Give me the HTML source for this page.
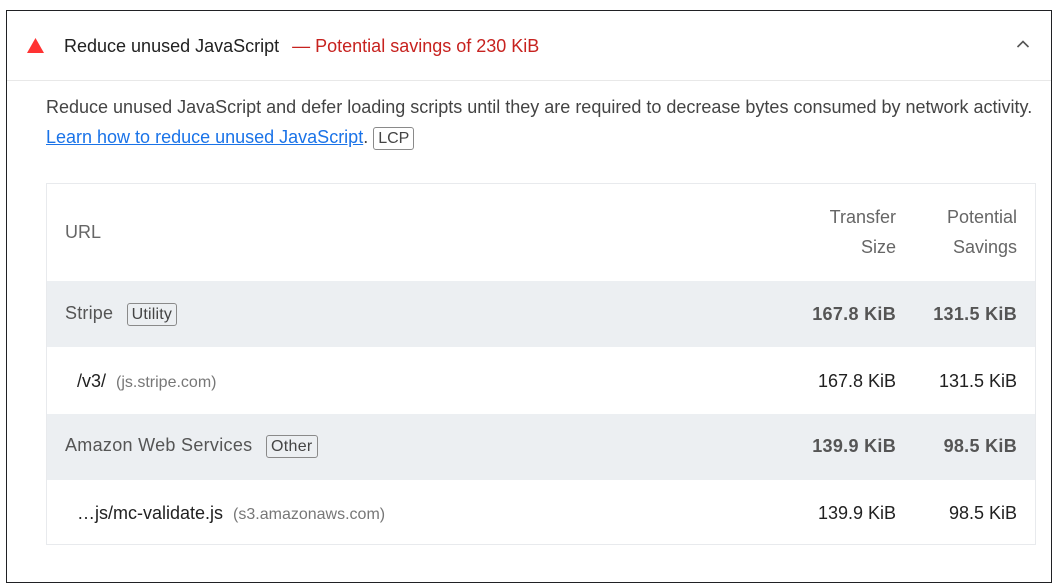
<!DOCTYPE html>
<html><head><style>
*{margin:0;padding:0;box-sizing:border-box}
body{width:1058px;height:585px;background:#fff;font-family:"Liberation Sans",Arial,sans-serif;font-size:18px;color:#212121;position:relative;overflow:hidden}
.a{position:absolute;white-space:nowrap}
.frame{position:absolute;left:6px;top:10px;width:1046px;height:573px;border:1px solid #202124}
.hl{position:absolute;left:7px;top:80px;width:1044px;height:1px;background:#e8e8e8}
.tbl{position:absolute;left:46px;top:183px;width:990px;height:362px;border:1px solid #e8eaed}
.row{position:absolute;left:0;width:988px}
.g{background:#eceff2}
.badge{display:inline-block;border:1px solid #8a8a8a;border-radius:3px;padding:0 4px;line-height:21px;font-size:16px;color:#444;margin-left:3px}
.r{text-align:right}
b{font-weight:bold;letter-spacing:0.3px}
</style></head><body>
<div class="frame"></div>
<svg class="a" style="left:27px;top:38px" width="17" height="15"><polygon points="8.5,0 17,15 0,15" fill="#ff3333"/></svg>
<div class="a" style="left:64px;top:36px;color:#212121">Reduce unused JavaScript<span style="color:#c7221f;margin-left:13px">—&nbsp;Potential savings of 230 KiB</span></div>
<svg class="a" style="left:1016px;top:39px" width="14" height="10"><path d="M1.5 8 L7 2.5 L12.5 8" stroke="#555" stroke-width="1.6" fill="none"/></svg>
<div class="hl"></div>
<div class="a" style="left:46px;top:97px;color:#444">Reduce unused JavaScript and defer loading scripts until they are required to decrease bytes consumed by network activity.</div>
<div class="a" style="left:46px;top:127px;color:#444"><span style="text-decoration:underline;color:#1a73e8">Learn how to reduce unused JavaScript</span>. <span class="badge" style="margin-left:0">LCP</span></div>
<div class="tbl">
 <div class="a" style="left:18px;top:38px;color:#666">URL</div>
 <div class="a r" style="right:139px;top:18px;color:#666;line-height:30px">Transfer<br>Size</div>
 <div class="a r" style="right:18px;top:18px;color:#666;line-height:30px">Potential<br>Savings</div>
 <div class="row g" style="top:97px;height:66px"></div>
 <div class="a" style="left:18px;top:119px;color:#555;letter-spacing:0.2px">Stripe&nbsp; <span class="badge">Utility</span></div>
 <div class="a r" style="right:139px;top:120px;color:#555"><b>167.8 KiB</b></div>
 <div class="a r" style="right:18px;top:120px;color:#555"><b>131.5 KiB</b></div>
 <div class="a" style="left:30px;top:187px">/v3/&nbsp; <span style="color:#777;font-size:16px">(js.stripe.com)</span></div>
 <div class="a r" style="right:139px;top:187px">167.8 KiB</div>
 <div class="a r" style="right:18px;top:187px">131.5 KiB</div>
 <div class="row g" style="top:230px;height:66px"></div>
 <div class="a" style="left:18px;top:251px;color:#555;letter-spacing:0.3px">Amazon Web Services&nbsp; <span class="badge">Other</span></div>
 <div class="a r" style="right:139px;top:252px;color:#555"><b>139.9 KiB</b></div>
 <div class="a r" style="right:18px;top:252px;color:#555"><b>98.5 KiB</b></div>
 <div class="a" style="left:30px;top:319px">…js/mc-validate.js&nbsp; <span style="color:#777;font-size:16px">(s3.amazonaws.com)</span></div>
 <div class="a r" style="right:139px;top:319px">139.9 KiB</div>
 <div class="a r" style="right:18px;top:319px">98.5 KiB</div>
</div>
</body></html>
